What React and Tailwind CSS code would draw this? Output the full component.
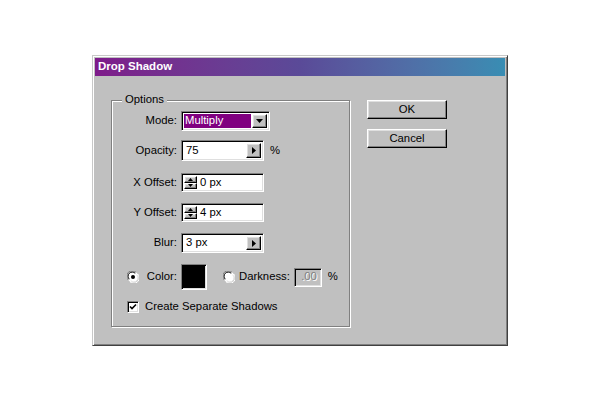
import React from 'react';

const raised =
  'border border-t-white border-l-white border-r-black border-b-black bg-[#c0c0c0] shadow-[inset_-1px_-1px_0_#808080,inset_1px_1px_0_#dfdfdf]';
const sunken =
  'border border-t-[#808080] border-l-[#808080] border-r-white border-b-white shadow-[inset_1px_1px_0_#000,inset_-1px_-1px_0_#dfdfdf]';

function ArrowRight() {
  return (
    <svg width="4" height="7" viewBox="0 0 4 7">
      <path d="M0 0 L4 3.5 L0 7 Z" fill="#000" />
    </svg>
  );
}

function ArrowDown() {
  return (
    <svg width="7" height="4" viewBox="0 0 7 4">
      <path d="M0 0 L7 0 L3.5 4 Z" fill="#000" />
    </svg>
  );
}

function Radio({ checked }) {
  return (
    <svg width="12" height="12" viewBox="0 0 12 12" className="shrink-0">
      <circle cx="6" cy="6" r="5.5" fill="#fff" />
      <path d="M1.3 9 A5 5 0 0 1 9 1.3" stroke="#808080" strokeWidth="1" fill="none" />
      <path d="M2.3 8.2 A4 4 0 0 1 8.2 2.3" stroke="#000" strokeWidth="1" fill="none" />
      <path d="M10.7 3 A5 5 0 0 1 3 10.7" stroke="#fff" strokeWidth="1" fill="none" />
      <path d="M9.7 3.8 A4 4 0 0 1 3.8 9.7" stroke="#dfdfdf" strokeWidth="1" fill="none" />
      {checked && <circle cx="6" cy="6" r="2" fill="#000" />}
    </svg>
  );
}

function Checkbox() {
  return (
    <div className={`w-[12px] h-[12px] bg-white flex items-center justify-center ${sunken}`}>
      <svg width="8" height="8" viewBox="0 0 8 8">
        <path d="M1 3.5 L3 5.5 L7 1.5" stroke="#000" strokeWidth="1.6" fill="none" />
      </svg>
    </div>
  );
}

function Row({ label, className = '', children }) {
  return (
    <div className={`flex items-center ${className}`}>
      <div className="w-[65px] text-right">{label}</div>
      <div className="ml-[4px] flex items-center">{children}</div>
    </div>
  );
}

function ArrowField({ value, h }) {
  return (
    <div className={`w-[83px] ${h} bg-white flex items-stretch p-[2px] ${sunken}`}>
      <div className="flex-1 pl-[2px] flex items-center">{value}</div>
      <div className={`w-[15px] flex items-center justify-center ${raised}`}>
        <ArrowRight />
      </div>
    </div>
  );
}

function SpinField({ value }) {
  return (
    <div className={`w-[83px] h-[19px] bg-white flex items-stretch p-[2px] ${sunken}`}>
      <div className="w-[13px] flex flex-col">
        <div className={`flex-1 flex items-center justify-center ${raised}`}>
          <svg width="5" height="3" viewBox="0 0 5 3">
            <path d="M0 3 L5 3 L2.5 0 Z" fill="#000" />
          </svg>
        </div>
        <div className={`flex-1 flex items-center justify-center ${raised}`}>
          <svg width="5" height="3" viewBox="0 0 5 3">
            <path d="M0 0 L5 0 L2.5 3 Z" fill="#000" />
          </svg>
        </div>
      </div>
      <div className="flex-1 pl-[3px] flex items-center">{value}</div>
    </div>
  );
}

export default function App() {
  return (
    <div className="min-h-screen bg-white text-[11.3px] text-black font-['Liberation_Sans',Arial,sans-serif] leading-none">
      <div className="ml-[92px] pt-[55px]">
        <div className="w-[416px] h-[291px] bg-[#c0c0c0] border border-t-[#c8c8c8] border-l-[#c8c8c8] border-r-[#404040] border-b-[#404040] shadow-[inset_1px_1px_0_#fff,inset_-1px_-1px_0_#808080] p-[2px]">
          <div className="h-[18px] bg-gradient-to-r from-[#7e1a8a] via-[#5a4a98] to-[#388db3] flex items-center pl-[3px]">
            <span className="text-white font-bold text-[11.5px]">Drop Shadow</span>
          </div>

          <div className="flex pl-[16px] pt-[24px]">
            <div className="relative w-[239px] h-[227px] border border-[#808080] shadow-[inset_1px_1px_0_#fff,1px_1px_0_#fff] pt-[10px]">
              <span className="absolute -top-[7px] left-[10px] px-[3px] bg-[#c0c0c0]">Options</span>

              <Row label="Mode:" className="h-[20px]">
                <div className={`w-[89px] h-[20px] bg-white flex items-stretch p-[2px] ${sunken}`}>
                  <div className="flex-1 bg-[#800080] text-white flex items-center pl-[1px] mr-[1px]">
                    Multiply
                  </div>
                  <div className={`w-[15px] flex items-center justify-center ${raised}`}>
                    <ArrowDown />
                  </div>
                </div>
              </Row>

              <Row label="Opacity:" className="h-[21px] mt-[9px]">
                <ArrowField value="75" h="h-[21px]" />
                <span className="ml-[6px]">%</span>
              </Row>

              <Row label="X Offset:" className="h-[19px] mt-[12px]">
                <SpinField value="0 px" />
              </Row>

              <Row label="Y Offset:" className="h-[19px] mt-[11px]">
                <SpinField value="4 px" />
              </Row>

              <Row label="Blur:" className="h-[20px] mt-[11px]">
                <ArrowField value="3 px" h="h-[20px]" />
              </Row>

              <div className="flex items-center h-[26px] mt-[11px]">
                <div className="w-[65px] flex items-center justify-between pl-[15px]">
                  <Radio checked />
                  <span>Color:</span>
                </div>
                <div className={`ml-[4px] w-[26px] h-[26px] bg-black ${sunken}`} />
                <div className="ml-[16px]">
                  <Radio />
                </div>
                <span className="ml-[4px]">Darkness:</span>
                <div className={`ml-[4px] w-[28px] h-[19px] bg-[#c0c0c0] flex items-center justify-end pr-[4px] text-[#808080] [text-shadow:1px_1px_0_#fff] ${sunken}`}>
                  .00
                </div>
                <span className="ml-[6px]">%</span>
              </div>

              <div className="flex items-center h-[14px] mt-[10px] pl-[15px]">
                <Checkbox />
                <span className="ml-[6px]">Create Separate Shadows</span>
              </div>
            </div>

            <div className="ml-[17px] flex flex-col gap-[10px]">
              <div className={`w-[80px] h-[19px] flex items-center justify-center ${raised}`}>OK</div>
              <div className={`w-[80px] h-[19px] flex items-center justify-center ${raised}`}>Cancel</div>
            </div>
          </div>
        </div>
      </div>
    </div>
  );
}
